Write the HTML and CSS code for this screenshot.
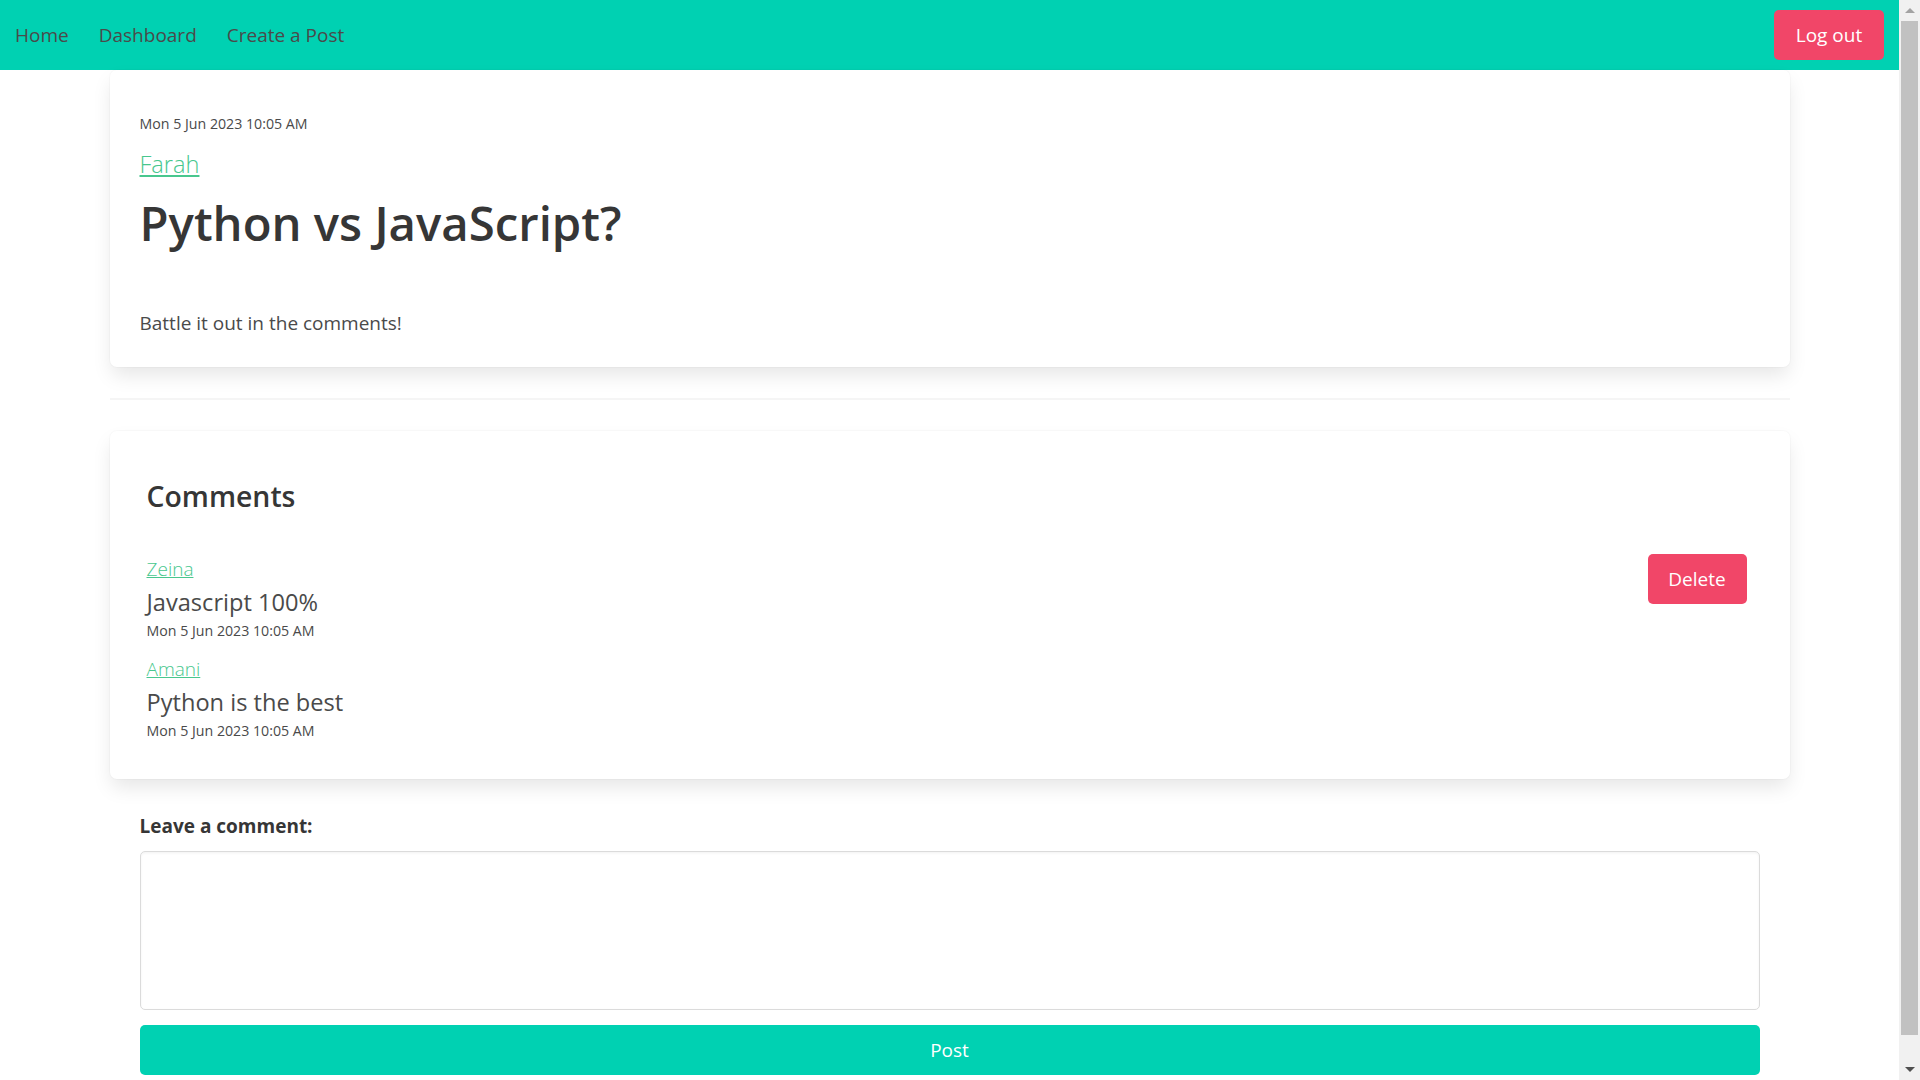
FILE: index.html
```html
<!DOCTYPE html>
<html lang="en">
<head>
<meta charset="utf-8">
<title>Python vs JavaScript?</title>
<link rel="stylesheet" href="styles.css">
</head>
<body>
<div class="page">
<nav class="navbar">
  <div class="nav-start">
    <a class="nav-item" href="#">Home</a>
    <a class="nav-item" href="#">Dashboard</a>
    <a class="nav-item" href="#">Create a Post</a>
  </div>
  <div class="nav-end">
    <a class="btn btn-danger btn-logout" href="#">Log out</a>
  </div>
</nav>
<main class="container">
  <article class="box post">
    <p class="meta">Mon 5 Jun 2023 10:05 AM</p>
    <p class="author-line"><a class="author" href="#">Farah</a></p>
    <h1 class="post-title">Python vs JavaScript?</h1>
    <p class="post-body">Battle it out in the comments!</p>
  </article>
  <hr class="divider">
  <section class="box comments">
    <h2 class="comments-title">Comments</h2>
    <div class="comment-list">
      <div class="comment">
        <div class="comment-content">
          <p class="author-line-sm"><a class="author" href="#">Zeina</a></p>
          <p class="comment-text">Javascript 100%</p>
          <p class="comment-date">Mon 5 Jun 2023 10:05 AM</p>
        </div>
        <button class="btn btn-danger btn-delete" type="button">Delete</button>
      </div>
      <div class="comment">
        <div class="comment-content">
          <p class="author-line-sm"><a class="author" href="#">Amani</a></p>
          <p class="comment-text">Python is the best</p>
          <p class="comment-date">Mon 5 Jun 2023 10:05 AM</p>
        </div>
      </div>
    </div>
  </section>
  <form class="comment-form">
    <label class="form-label" for="comment">Leave a comment:</label>
    <textarea id="comment" class="textarea"></textarea>
    <button class="btn btn-primary btn-full" type="button">Post</button>
  </form>
</main>
</div>
<div class="scrollbar" aria-hidden="true">
  <div class="sb-btn"><span class="sb-arrow sb-up"></span></div>
  <div class="sb-track"><div class="sb-thumb"></div></div>
  <div class="sb-btn"><span class="sb-arrow sb-down"></span></div>
</div>
</body>
</html>
```

FILE: styles.css
```css
* { box-sizing: border-box; }

html, body {
  margin: 0;
  padding: 0;
  height: 100%;
  overflow: hidden;
}

body {
  display: flex;
  font-family: "Open Sans", "Noto Sans", "Liberation Sans", sans-serif;
  font-size: 19px;
  line-height: 1.5;
  color: #4a4a4a;
  background: #fff;
}

.page {
  flex: 1;
  min-width: 0;
  height: 100vh;
  overflow: hidden;
}

/* Window scrollbar */
.scrollbar {
  width: 21px;
  flex: 0 0 21px;
  height: 100vh;
  display: flex;
  flex-direction: column;
  background: #f1f1f1;
}

.sb-btn {
  height: 21px;
  flex: 0 0 21px;
  display: flex;
  align-items: center;
  justify-content: center;
}

.sb-arrow {
  width: 0;
  height: 0;
  border-left: 5px solid transparent;
  border-right: 5px solid transparent;
}

.sb-up { border-bottom: 5px solid #a3a3a3; }
.sb-down { border-top: 5px solid #505050; }

.sb-track {
  flex: 1;
  padding: 0 2px;
}

.sb-thumb {
  height: 1014px;
  background: #c1c1c1;
}

p { margin: 0; }

a { color: #48c78e; }

/* Navbar */
.navbar {
  display: flex;
  justify-content: space-between;
  align-items: center;
  height: 70px;
  background: #00d1b2;
}

.nav-start {
  display: flex;
  align-items: center;
}

.nav-item {
  padding: 10px 15px;
  color: #4a4a4a;
  text-decoration: none;
  font-size: 19px;
  line-height: 30px;
}

.nav-end {
  display: flex;
  align-items: center;
  padding-right: 15px;
}

/* Buttons */
.btn {
  display: inline-flex;
  align-items: center;
  justify-content: center;
  height: 50px;
  padding: 0 19px;
  border: 1px solid transparent;
  border-radius: 5px;
  font-family: inherit;
  font-size: 19px;
  line-height: 1.5;
  text-decoration: none;
  cursor: pointer;
  color: #fff;
}

.btn-danger { background: #f14668; }
.btn-primary { background: #00d1b2; }
.btn-full { width: 100%; display: flex; }
.btn-logout { width: 110px; }
.btn-delete { width: 99px; }

/* Layout */
.container {
  width: 1680px;
  margin: 0 auto;
}

.box {
  background: #fff;
  border-radius: 7px;
  box-shadow: 0 10px 20px -2.5px rgba(10, 10, 10, 0.1), 0 0 0 1px rgba(10, 10, 10, 0.02);
}

/* Post */
.post {
  padding: 43px 30px 29px;
}

.meta {
  font-size: 14.2px;
  line-height: 22.5px;
}

.author-line {
  margin-top: 10.5px;
  font-size: 23.6px;
  line-height: 37.5px;
}

.author {
  color: #48c78e;
  font-weight: 300;
  text-decoration: underline;
}

.post-title {
  margin: 11px 0 0;
  font-size: 47.3px;
  line-height: 56.25px;
  font-weight: 600;
  color: #363636;
}

.post-body {
  margin-top: 57px;
  font-size: 19px;
  line-height: 30px;
}

.divider {
  margin: 31px 0;
  height: 2px;
  border: none;
  background: #f5f5f5;
}

/* Comments */
.comments {
  padding: 49px 43px 38.5px 37px;
}

.comments-title {
  margin: 0;
  font-size: 28.4px;
  line-height: 33.75px;
  font-weight: 600;
  color: #363636;
}

.comment-list {
  margin-top: 40.7px;
  display: flex;
  flex-direction: column;
  gap: 13.75px;
}

.comment {
  display: flex;
  justify-content: space-between;
  align-items: flex-start;
}

.author-line-sm {
  font-size: 19px;
  line-height: 30px;
}

.comment-text {
  font-size: 23.6px;
  line-height: 37.5px;
}

.comment-date {
  font-size: 14.2px;
  line-height: 18.75px;
}

/* Form */
.comment-form {
  padding: 0 30px;
  margin: 32.3px 0 39px;
}

.form-label {
  display: block;
  font-size: 19px;
  line-height: 30px;
  font-weight: 700;
  color: #363636;
  margin-bottom: 9.5px;
}

.textarea {
  display: block;
  width: 100%;
  height: 159px;
  padding: 14px;
  border: 1px solid #dbdbdb;
  border-radius: 5px;
  box-shadow: inset 0 1.25px 2.5px rgba(10, 10, 10, 0.05);
  font-family: inherit;
  font-size: 19px;
  resize: none;
}

.comment-form .btn-full {
  margin-top: 15.5px;
}
```
